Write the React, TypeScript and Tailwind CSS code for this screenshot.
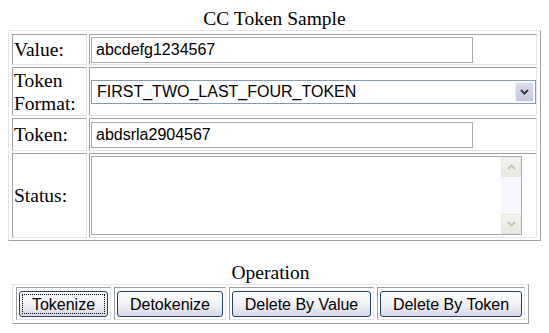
import React from 'react';

const cell = 'border border-t-[#a0a0a0] border-l-[#a0a0a0] border-r-[#e3e3e3] border-b-[#e3e3e3]';
const sans = "font-['Liberation_Sans',Arial,sans-serif] text-[16px]";

const Chevron = ({ up, color }: { up?: boolean; color: string }) => (
  <svg width="9" height="6" viewBox="0 0 9 6">
    <path d={up ? 'M1 5 L4.5 1.5 L8 5' : 'M1 1 L4.5 4.5 L8 1'} fill="none" stroke={color} strokeWidth="2" />
  </svg>
);

const ScrollButton = ({ up }: { up?: boolean }) => (
  <div className="flex h-[20px] w-[20px] items-center justify-center rounded-[2px] border border-[#e6e4dc] bg-linear-to-b from-[#f4f3ee] to-[#e8e6dd]">
    <Chevron up={up} color="#c2c2c2" />
  </div>
);

const XpButton = ({ label, width, focused }: { label: string; width: string; focused?: boolean }) => (
  <button
    className={`relative h-[26px] ${width} rounded-[3px] border border-[#1f3f6e] bg-linear-to-b from-white via-[#f1f1f6] to-[#d9d8e8] text-black ${sans}`}
  >
    {focused && <span className="absolute inset-[2px] border border-dotted border-black" />}
    {label}
  </button>
);

export default function App() {
  const operations = [
    { label: 'Tokenize', width: 'w-[89px]', focused: true },
    { label: 'Detokenize', width: 'w-[106px]' },
    { label: 'Delete By Value', width: 'w-[139px]' },
    { label: 'Delete By Token', width: 'w-[142px]' },
  ];

  return (
    <div className="min-h-screen bg-white px-2 pt-[7px] font-['Liberation_Serif','Times_New_Roman',serif] text-[19.5px] leading-[23px] text-black">
      <div className="text-center">CC Token Sample</div>

      {/* Form table */}
      <div className="grid grid-cols-[75px_1fr] grid-rows-[31px_49px_33px_85px] gap-x-[2px] gap-y-[2px] border border-t-[#e3e3e3] border-l-[#e3e3e3] border-r-[#a0a0a0] border-b-[#a0a0a0] px-[3px] pt-[3px] pb-[2px]">
        <div className={`${cell} flex items-center px-[1px]`}>Value:</div>
        <div className={`${cell} flex items-center pl-[1px]`}>
          <input
            readOnly
            value="abcdefg1234567"
            className={`h-[26px] w-[382px] border border-[#a5acb2] bg-white px-[4px] outline-none ${sans}`}
          />
        </div>

        <div className={`${cell} flex items-center px-[1px]`}>Token Format:</div>
        <div className={`${cell} flex items-center pl-[1px]`}>
          <div className={`flex h-[24px] w-[445px] items-center border border-[#7f9db9] bg-white ${sans}`}>
            <span className="flex-1 pl-[5px] leading-[18px]">FIRST_TWO_LAST_FOUR_TOKEN</span>
            <div className="m-px flex h-[20px] w-[19px] items-center justify-center border border-[#f0f0f8] bg-linear-to-b from-[#dcdcef] to-[#c6c6de]">
              <Chevron color="#3a3a4a" />
            </div>
          </div>
        </div>

        <div className={`${cell} flex items-center px-[1px]`}>Token:</div>
        <div className={`${cell} flex items-center pl-[1px]`}>
          <input
            readOnly
            value="abdsrla2904567"
            className={`h-[26px] w-[382px] border border-[#a5acb2] bg-white px-[4px] outline-none ${sans}`}
          />
        </div>

        <div className={`${cell} flex items-center px-[1px]`}>Status:</div>
        <div className={`${cell} flex items-center pl-[1px]`}>
          <div className="flex h-[79px] w-[431px] border border-[#a5acb2] bg-white">
            <textarea readOnly className={`flex-1 resize-none overflow-hidden px-[4px] outline-none ${sans}`} />
            <div className="flex w-[20px] flex-col justify-between bg-[#f7f6fc]">
              <ScrollButton up />
              <ScrollButton />
            </div>
          </div>
        </div>
      </div>

      {/* Operation buttons */}
      <div className="mt-[20px] ml-[4px] w-fit">
        <div className="text-center">Operation</div>
        <div className="flex gap-x-[3px] border border-t-[#e3e3e3] border-l-[#e3e3e3] border-r-[#a0a0a0] border-b-[#a0a0a0] px-[3px] pt-[2px] pb-[3px]">
          {operations.map((op) => (
            <div key={op.label} className={`${cell} flex px-[2px] pt-[3px] pb-[2px]`}>
              <XpButton label={op.label} width={op.width} focused={op.focused} />
            </div>
          ))}
        </div>
      </div>
    </div>
  );
}
